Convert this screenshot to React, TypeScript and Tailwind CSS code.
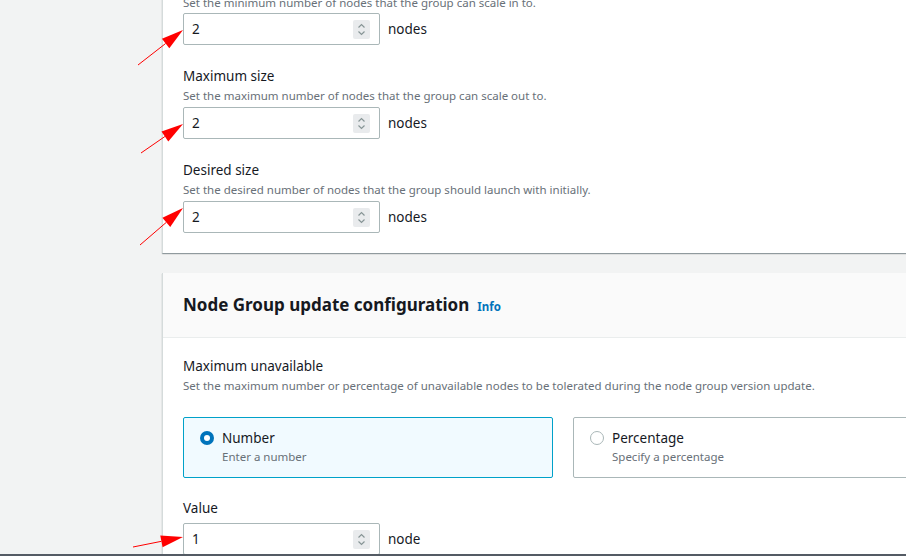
import React from "react";

const font = { fontFamily: "'Noto Sans', 'Open Sans', sans-serif" };

const Spinner = () => (
  <div className="flex flex-col items-center justify-center w-[17px] h-[19px] bg-[#e9ebed] rounded-[2px]">
    <svg width="9" height="15" viewBox="0 0 9 15" fill="none" stroke="#879596" strokeWidth="1.2">
      <path d="M1.5 5.5 L4.5 2.5 L7.5 5.5" />
      <path d="M1.5 9.5 L4.5 12.5 L7.5 9.5" />
    </svg>
  </div>
);

const NumberInput = ({ value, unit }: { value: string; unit: string }) => (
  <div className="flex flex-row items-center gap-2">
    <div className="flex flex-row items-center justify-between w-[197px] h-[32px] border border-[#aab7b8] rounded-[2px] bg-white pl-2 pr-[9px]">
      <span className="text-[13.5px] leading-[18px] text-[#16191f]">{value}</span>
      <Spinner />
    </div>
    <span className="text-[13.5px] leading-[18px] text-[#16191f]">{unit}</span>
  </div>
);

const Field = ({ label, desc, value, unit }: { label: string; desc: string; value: string; unit: string }) => (
  <div className="mt-[21px]">
    <div className="text-[13.5px] leading-[20px] text-[#16191f]">{label}</div>
    <div className="text-[11.5px] leading-[16px] text-[#687078] mt-[2px] mb-[3px]">{desc}</div>
    <NumberInput value={value} unit={unit} />
  </div>
);

const Radio = ({ checked }: { checked: boolean }) =>
  checked ? (
    <span className="flex items-center justify-center w-[14px] h-[14px] rounded-full bg-[#0073bb]">
      <span className="block w-[6px] h-[6px] rounded-full bg-white" />
    </span>
  ) : (
    <span className="block w-[14px] h-[14px] rounded-full border border-[#aab7b8] bg-white" />
  );

const Tile = ({ checked, title, desc }: { checked: boolean; title: string; desc: string }) => (
  <div
    className={
      checked
        ? "flex flex-row gap-[8px] h-[61px] px-[16px] pt-[11px] border border-[#00a1c9] bg-[#f1faff] rounded-[2px]"
        : "flex flex-row gap-[8px] h-[61px] px-[16px] pt-[11px] border border-[#aab7b8] bg-white rounded-[2px]"
    }
  >
    <div className="pt-[2px]">
      <Radio checked={checked} />
    </div>
    <div>
      <div className="text-[13.5px] leading-[18px] text-[#16191f]">{title}</div>
      <div className="text-[11.5px] leading-[16px] text-[#687078] mt-[2px]">{desc}</div>
    </div>
  </div>
);

const Arrows = () => (
  <svg className="absolute left-0 top-0 pointer-events-none" width="906" height="556">
    {[
      [138, 65, 183, 30],
      [141, 153, 183, 124],
      [140, 245, 183, 208],
      [133, 547, 183, 537],
    ].map(([x1, y1, x2, y2], i) => {
      const a = Math.atan2(y2 - y1, x2 - x1);
      const len = 22;
      const w = 6;
      const bx = x2 - len * Math.cos(a);
      const by = y2 - len * Math.sin(a);
      const px = -Math.sin(a) * w;
      const py = Math.cos(a) * w;
      return (
        <g key={i}>
          <line x1={x1} y1={y1} x2={bx} y2={by} stroke="#ff0000" strokeWidth="1" />
          <polygon points={`${x2},${y2} ${bx + px},${by + py} ${bx - px},${by - py}`} fill="#ff0000" />
        </g>
      );
    })}
  </svg>
);

export default function App() {
  return (
    <div className="relative w-[906px] h-[556px] overflow-hidden bg-[#f2f3f3] flex flex-col" style={font}>
      <div className="flex-1 overflow-hidden pl-[162px]">
        <div className="w-[900px] -mt-[5px]">
          {/* capacity card */}
          <div className="bg-white border-l border-[#d5dbdb] shadow-[0_1px_1px_0_rgba(0,28,36,0.3),1px_1px_1px_0_rgba(0,28,36,0.15)] px-5 pb-5">
            <div className="text-[11.5px] leading-[16px] text-[#687078] mb-[2px]">
              Set the minimum number of nodes that the group can scale in to.
            </div>
            <NumberInput value="2" unit="nodes" />
            <Field label="Maximum size" desc="Set the maximum number of nodes that the group can scale out to." value="2" unit="nodes" />
            <Field label="Desired size" desc="Set the desired number of nodes that the group should launch with initially." value="2" unit="nodes" />
          </div>

          {/* update config card */}
          <div className="mt-5 bg-white border-l border-[#d5dbdb] shadow-[0_1px_1px_0_rgba(0,28,36,0.3)]">
            <div className="h-[65px] flex flex-row items-center gap-2 px-5 bg-[#fafafa] border-b border-[#eaeded]">
              <span className="text-[17px] font-bold text-[#16191f]">Node Group update configuration</span>
              <span className="text-[11.5px] font-bold text-[#0073bb] mt-[3px]">Info</span>
            </div>
            <div className="px-5 pt-[18px]">
              <div className="text-[13.5px] leading-[20px] text-[#16191f]">Maximum unavailable</div>
              <div className="text-[11.5px] leading-[16px] text-[#687078] mt-[2px]">
                Set the maximum number or percentage of unavailable nodes to be tolerated during the node group version update.
              </div>
              <div className="grid grid-cols-[370px_370px] gap-5 mt-[23px]">
                <Tile checked title="Number" desc="Enter a number" />
                <Tile checked={false} title="Percentage" desc="Specify a percentage" />
              </div>
              <div className="text-[13.5px] leading-[20px] text-[#16191f] mt-[20px]">Value</div>
              <div className="mt-[5px]">
                <NumberInput value="1" unit="node" />
              </div>
            </div>
          </div>
        </div>
      </div>
      <div className="h-[2px] bg-[#545b64]" />
      <Arrows />
    </div>
  );
}
